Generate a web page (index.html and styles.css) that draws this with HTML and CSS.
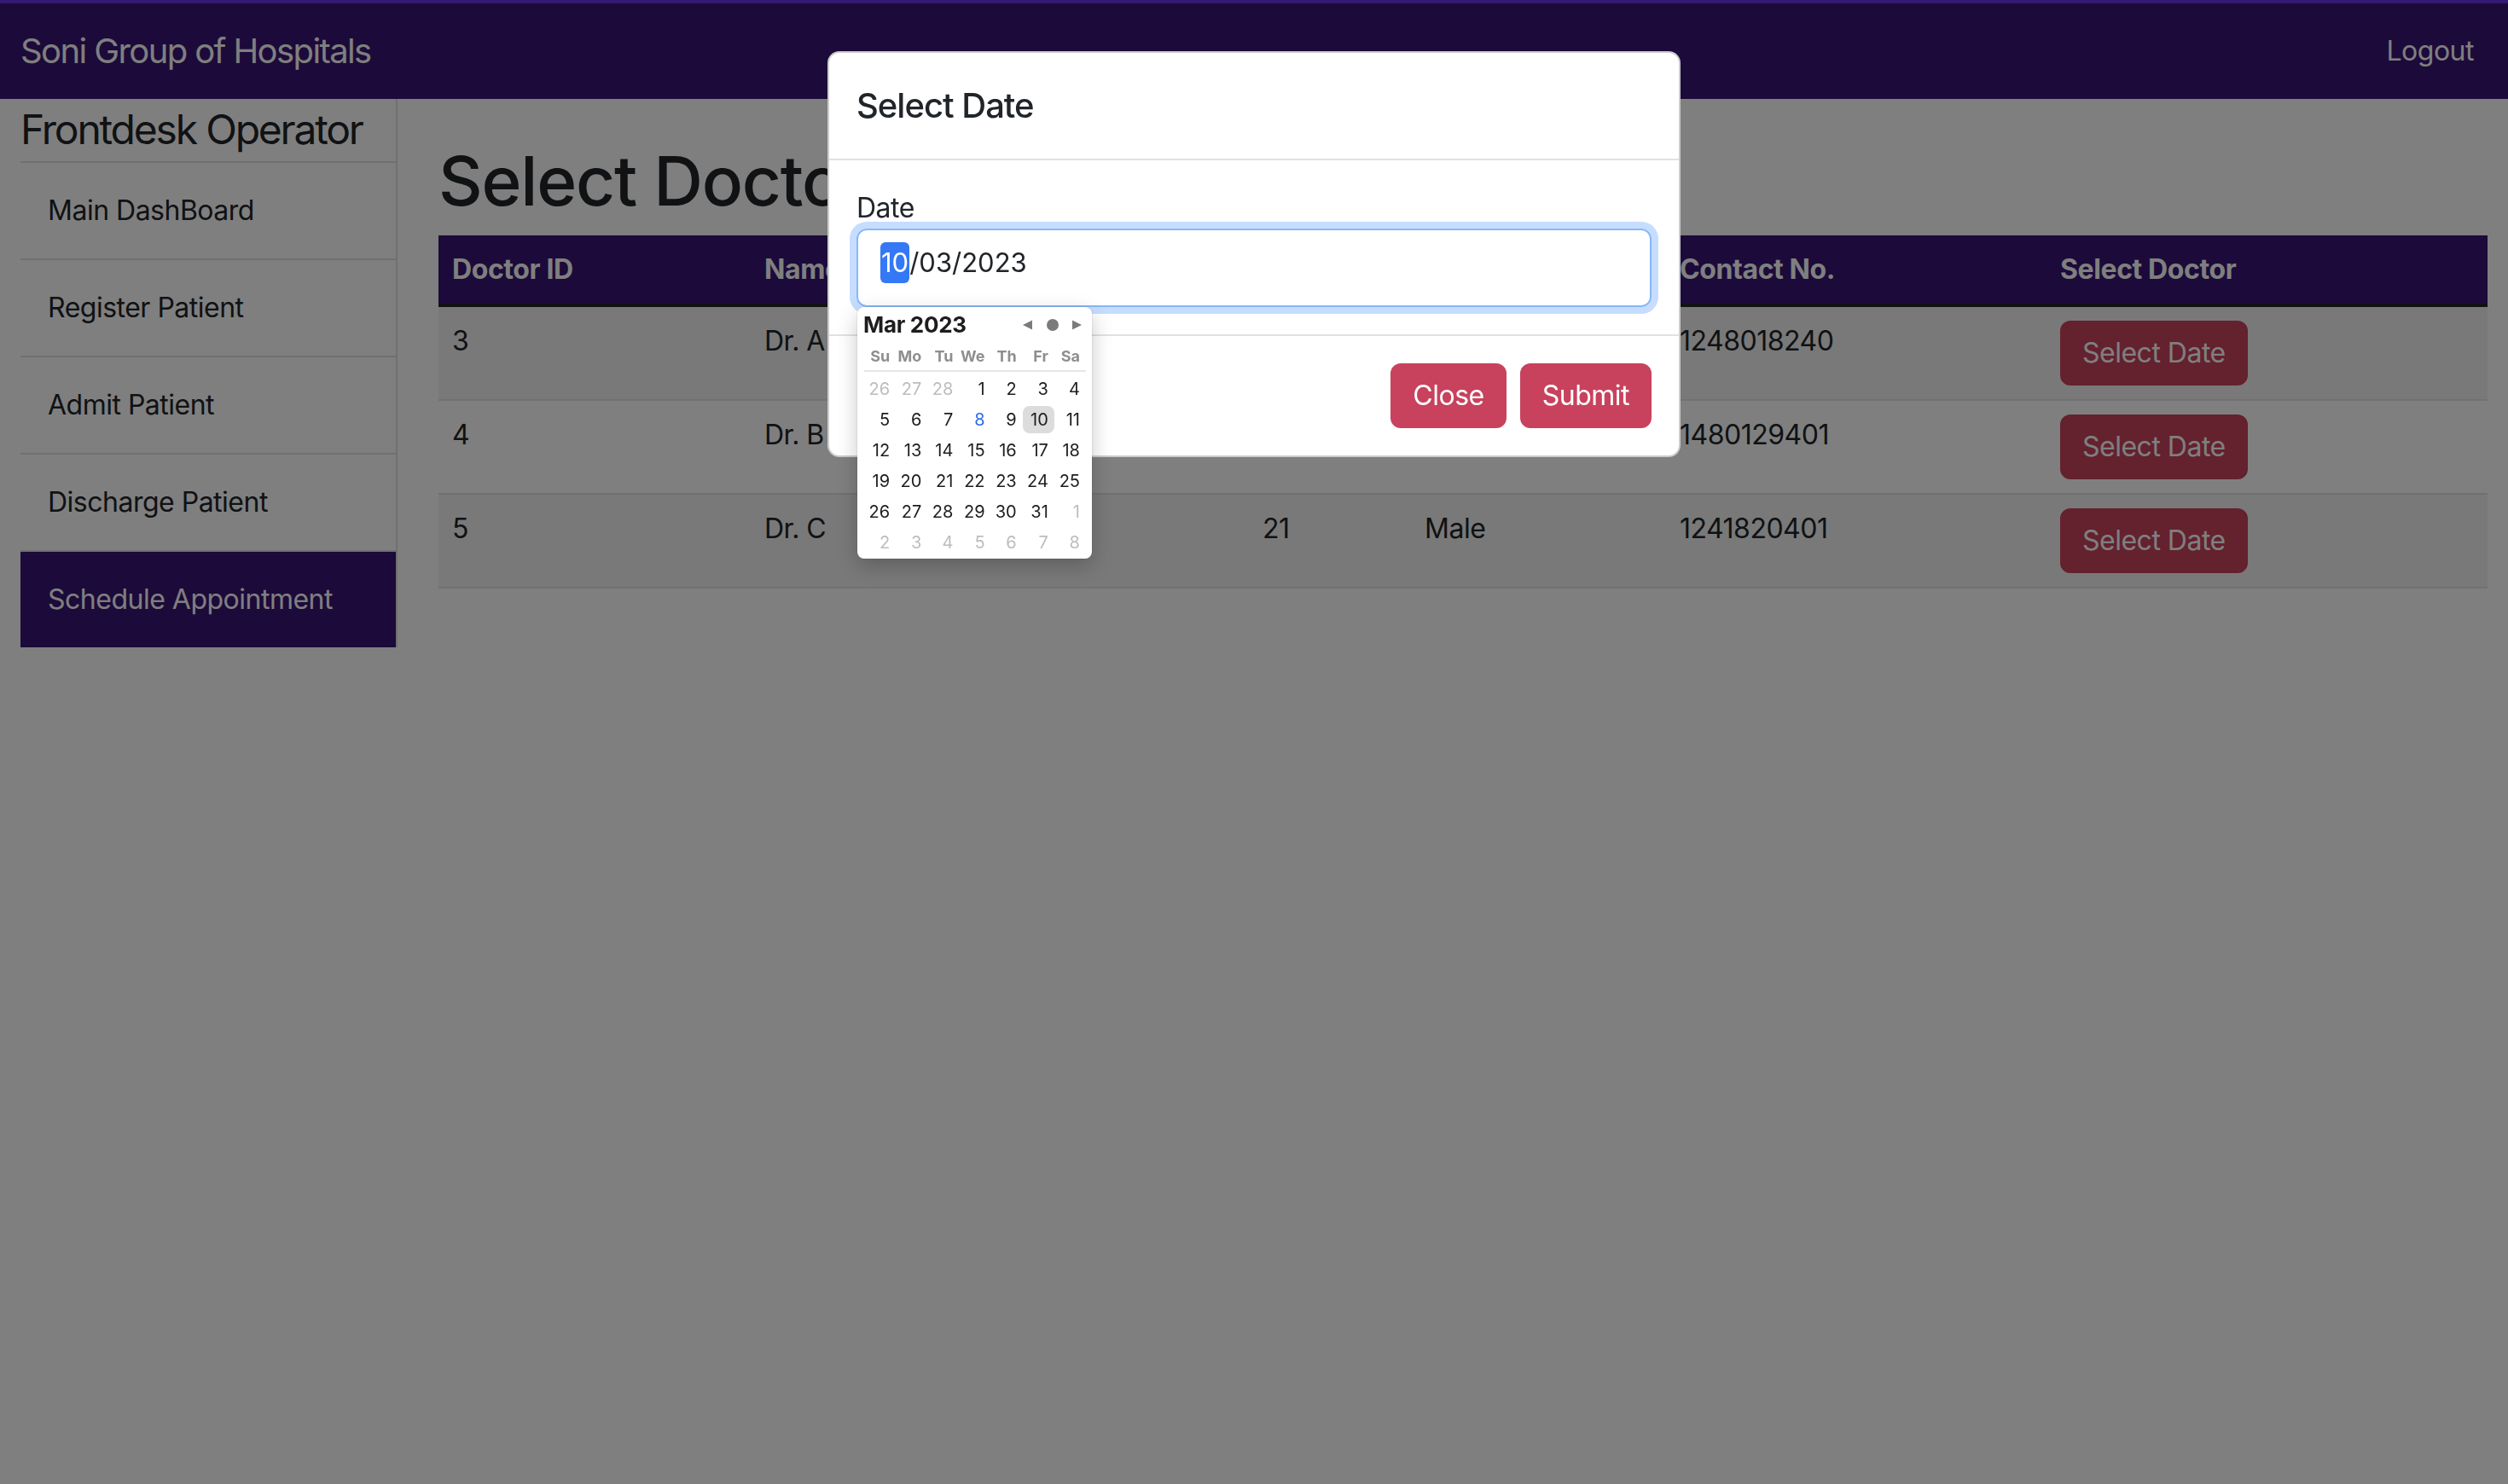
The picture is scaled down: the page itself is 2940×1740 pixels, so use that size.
FILE: index.html
```html
<!DOCTYPE html>
<html lang="en">
<head>
<meta charset="utf-8">
<title>Schedule Appointment</title>
<link rel="stylesheet" href="styles.css">
</head>
<body>
<nav class="navbar">
  <a class="brand">Soni Group of Hospitals</a>
  <a class="nav-link">Logout</a>
</nav>
<div class="layout">
  <aside class="sidebar">
    <div class="sidebar-inner">
      <h4 class="sidebar-title">Frontdesk Operator</h4>
      <ul class="menu">
        <li class="menu-item">Main DashBoard</li>
        <li class="menu-item">Register Patient</li>
        <li class="menu-item">Admit Patient</li>
        <li class="menu-item">Discharge Patient</li>
        <li class="menu-item active">Schedule Appointment</li>
      </ul>
    </div>
  </aside>
  <main class="content">
    <h1 class="page-title">Select Doctor</h1>
    <table class="doctors">
      <colgroup>
        <col class="c-id"><col class="c-name"><col class="c-age"><col class="c-gender"><col class="c-contact"><col class="c-action">
      </colgroup>
      <thead>
        <tr><th>Doctor ID</th><th>Name</th><th>Age</th><th>Gender</th><th>Contact No.</th><th>Select Doctor</th></tr>
      </thead>
      <tbody>
        <tr><td>3</td><td>Dr. A</td><td>34</td><td>Male</td><td>1248018240</td><td><button class="btn">Select Date</button></td></tr>
        <tr><td>4</td><td>Dr. B</td><td>29</td><td>Female</td><td>1480129401</td><td><button class="btn">Select Date</button></td></tr>
        <tr><td>5</td><td>Dr. C</td><td>21</td><td>Male</td><td>1241820401</td><td><button class="btn">Select Date</button></td></tr>
      </tbody>
    </table>
  </main>
</div>

<div class="backdrop"></div>

<div class="modal">
  <div class="modal-dialog">
    <div class="modal-content">
      <div class="modal-header">
        <h5 class="modal-title">Select Date</h5>
      </div>
      <div class="modal-body">
        <label class="date-label">Date</label>
        <div class="date-input"><span class="seg-selected">10</span><span>/03/2023</span></div>
      </div>
      <div class="modal-footer">
        <button class="btn">Close</button>
        <button class="btn">Submit</button>
      </div>
    </div>
  </div>
</div>

<div class="datepicker">
  <div class="dp-head">
    <span class="dp-title">Mar 2023</span>
    <svg class="dp-nav" width="69" height="14" viewBox="0 0 69 14">
      <polygon points="11,1.5 11,12.5 0,7" fill="#7b7b7b"/>
      <circle cx="35" cy="7" r="7" fill="#7b7b7b"/>
      <polygon points="58,1.5 58,12.5 69,7" fill="#7b7b7b"/>
    </svg>
  </div>
  <div class="dp-week">
    <span>Su</span><span>Mo</span><span>Tu</span><span>We</span><span>Th</span><span>Fr</span><span>Sa</span>
  </div>
  <div class="dp-days">
    <span class="muted">26</span><span class="muted">27</span><span class="muted">28</span><span>1</span><span>2</span><span>3</span><span>4</span>
    <span>5</span><span>6</span><span>7</span><span class="today">8</span><span>9</span><span class="sel">10</span><span>11</span>
    <span>12</span><span>13</span><span>14</span><span>15</span><span>16</span><span>17</span><span>18</span>
    <span>19</span><span>20</span><span>21</span><span>22</span><span>23</span><span>24</span><span>25</span>
    <span>26</span><span>27</span><span>28</span><span>29</span><span>30</span><span>31</span><span class="muted">1</span>
    <span class="muted">2</span><span class="muted">3</span><span class="muted">4</span><span class="muted">5</span><span class="muted">6</span><span class="muted">7</span><span class="muted">8</span>
  </div>
</div>
</body>
</html>
```

FILE: styles.css
```css
* { box-sizing: border-box; }

html, body { margin: 0; padding: 0; }

body {
  width: 2940px;
  height: 1740px;
  overflow: hidden;
  position: relative;
  font-family: Inter, "Liberation Sans", sans-serif;
  font-size: 32px;
  line-height: 48px;
  letter-spacing: -0.5px;
  color: #212529;
  background: #ffffff;
}

/* ---------- navbar ---------- */
.navbar {
  display: flex;
  align-items: center;
  justify-content: space-between;
  height: 116px;
  padding: 0 24px;
  background: #381474;
  border-top: 4px solid #6c33e4;
}

.brand {
  font-size: 40px;
  line-height: 60px;
  letter-spacing: -1.6px;
  color: #ffffff;
}

.nav-link {
  padding: 0 16px;
  color: #ffffff;
}

/* ---------- layout ---------- */
.layout {
  display: flex;
  align-items: flex-start;
}

.sidebar {
  flex: none;
  width: 490px;
  padding: 0 24px;
}

.sidebar-inner {
  border-right: 2px solid #e0e0e0;
}

.sidebar-title {
  margin: 0;
  padding: 7px 0 8px;
  font-size: 48px;
  line-height: 57.6px;
  font-weight: 400;
  letter-spacing: -2.2px;
  border-bottom: 2px solid #e0e0e0;
}

.menu {
  list-style: none;
  margin: 0;
  padding: 0;
}

.menu-item {
  padding: 32px;
  border-bottom: 2px solid #e0e0e0;
}

.menu-item:last-child {
  border-bottom: 0;
}

.menu-item.active {
  background: #381474;
  color: #ffffff;
}

.content {
  flex: 1;
  padding: 0 24px;
}

.page-title {
  margin: 48px 0 16px;
  font-size: 80px;
  line-height: 96px;
  font-weight: 500;
  letter-spacing: -1.2px;
}

/* ---------- table ---------- */
.doctors {
  width: 100%;
  border-collapse: collapse;
  table-layout: fixed;
}

.c-id { width: 366px; }
.c-name { width: 584px; }
.c-age { width: 190px; }
.c-gender { width: 299px; }
.c-contact { width: 446px; }
.c-action { width: 517px; }

.doctors th {
  padding: 16px;
  text-align: left;
  font-weight: 700;
  letter-spacing: -0.4px;
  color: #ffffff;
  background: #381474;
}

.doctors tbody {
  border-top: 4px solid #212529;
}

.doctors td {
  padding: 16px;
  vertical-align: top;
  border-bottom: 2px solid #dee2e6;
  white-space: nowrap;
}

.doctors tbody tr:nth-child(odd) td {
  background: #f2f2f2;
}

/* ---------- buttons ---------- */
.btn {
  display: inline-block;
  padding: 12px 24px;
  font: inherit;
  letter-spacing: inherit;
  line-height: 48px;
  color: #ffffff;
  background: #c8425d;
  border: 2px solid #c8425d;
  border-radius: 12px;
}

/* ---------- modal ---------- */
.backdrop {
  position: fixed;
  inset: 0;
  background: rgba(0, 0, 0, 0.5);
}

.modal {
  position: fixed;
  inset: 0;
}

.modal-dialog {
  width: 1000px;
  margin: 60px auto 0;
}

.modal-content {
  background: #ffffff;
  border: 2px solid rgba(0, 0, 0, 0.2);
  border-radius: 14px;
  overflow: hidden;
}

.modal-header {
  padding: 32px;
  border-bottom: 2px solid #dee2e6;
}

.modal-title {
  margin: 0;
  font-size: 40px;
  line-height: 60px;
  font-weight: 500;
  letter-spacing: -1px;
}

.modal-body {
  padding: 32px;
}

.date-label {
  display: block;
}

.date-input {
  display: flex;
  align-items: flex-start;
  height: 92px;
  padding: 14px 24px 0 26px;
  font-size: 31px;
  letter-spacing: 0;
  border: 2px solid #86b7fe;
  border-radius: 12px;
  box-shadow: 0 0 0 8px rgba(13, 110, 253, 0.23);
}

.seg-selected {
  padding: 0 1px;
  color: #ffffff;
  background: #3478f6;
  border-radius: 6px;
}

.modal-footer {
  display: flex;
  justify-content: flex-end;
  padding: 24px;
  border-top: 2px solid #dee2e6;
}

.modal-footer .btn {
  margin: 8px;
}

/* ---------- native date picker popup ---------- */
.datepicker {
  position: absolute;
  left: 1005px;
  top: 360px;
  width: 275px;
  height: 295px;
  padding: 0 7px 0 8px;
  background: #ffffff;
  border-radius: 8px;
  box-shadow: 0 8px 24px rgba(0, 0, 0, 0.22), 0 0 0 1px rgba(0, 0, 0, 0.06);
  font-size: 20px;
  line-height: 32px;
  letter-spacing: 0;
  color: #1d1d1f;
}

.dp-head {
  display: flex;
  align-items: center;
  justify-content: space-between;
  height: 42px;
  padding-right: 5px;
}

.dp-title {
  margin-left: -1px;
  font-size: 26px;
  font-weight: 700;
  letter-spacing: -0.3px;
}

.dp-week {
  display: grid;
  grid-template-columns: repeat(7, 1fr);
  height: 34px;
  font-size: 18px;
  font-weight: 700;
  color: #8e8e8e;
  border-bottom: 2px solid #e6e6e6;
}

.dp-week span,
.dp-days span {
  text-align: right;
  padding-right: 7px;
}

.dp-days {
  display: grid;
  grid-template-columns: repeat(7, 1fr);
  grid-auto-rows: 32px;
  row-gap: 4px;
  margin-top: 4px;
}

.dp-days .muted { color: #bdbdbd; }
.dp-days .today { color: #2c6ce6; }
.dp-days .sel {
  background: #dcdcdc;
  border-radius: 8px;
}
```
